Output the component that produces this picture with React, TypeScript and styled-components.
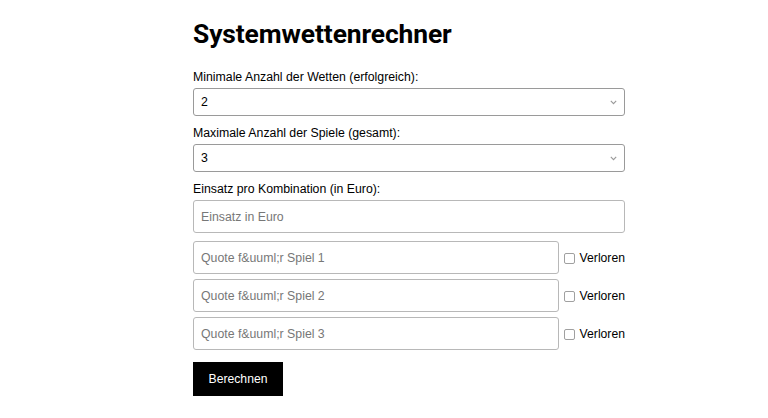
import React from "react";
import styled, { createGlobalStyle } from "styled-components";

const Global = createGlobalStyle`
  html, body { margin: 0; padding: 0; background: #fff; }
  body { font-family: "Liberation Sans", Arial, sans-serif; color: #000; }
`;

const Page = styled.div`
  width: 432px;
  margin-left: 193px;
  padding-top: 18px;
  display: flex;
  flex-direction: column;
`;

const Title = styled.h1`
  margin: 0 0 20px;
  font-family: Roboto, "Liberation Sans", sans-serif;
  font-weight: 700;
  font-size: 26.4px;
  line-height: 32px;
  letter-spacing: -0.1px;
`;

const Field = styled.div<{ $gap?: number }>`
  display: flex;
  flex-direction: column;
  gap: 3px;
  margin-bottom: ${(p) => p.$gap ?? 10}px;
`;

const Label = styled.label`
  font-size: 12.3px;
  line-height: 15px;
`;

const SelectWrap = styled.div`
  position: relative;
  height: 28px;
`;

const Select = styled.select`
  appearance: none;
  -webkit-appearance: none;
  width: 100%;
  height: 28px;
  box-sizing: border-box;
  border: 1px solid #9a9a9a;
  border-radius: 3px;
  background: #fff;
  padding: 0 7px;
  font-family: "Liberation Sans", Arial, sans-serif;
  font-size: 12.3px;
  color: #000;
  outline: none;
`;

const Chevron = styled.svg`
  position: absolute;
  right: 8px;
  top: 12px;
  pointer-events: none;
`;

const TextInput = styled.input`
  width: 100%;
  height: 33px;
  box-sizing: border-box;
  border: 1px solid #b8b8b8;
  border-radius: 3px;
  padding: 0 7px;
  font-family: "Liberation Sans", Arial, sans-serif;
  font-size: 12.3px;
  color: #000;
  outline: none;
  &::placeholder { color: #777; }
`;

const Rows = styled.div`
  display: flex;
  flex-direction: column;
  gap: 5px;
  margin-top: -1px;
`;

const Row = styled.div`
  display: flex;
  align-items: center;
`;

const QuoteInput = styled(TextInput)`
  flex: 1;
  width: auto;
`;

const Check = styled.input`
  appearance: none;
  -webkit-appearance: none;
  width: 11px;
  height: 11px;
  margin: 1px 0 0 5px;
  border: 1px solid #a0a0a0;
  border-radius: 2px;
  background: #fff;
`;

const CheckLabel = styled.label`
  margin-left: 5px;
  padding-top: 2px;
  font-size: 12.2px;
  line-height: 15px;
`;

const Button = styled.button`
  align-self: flex-start;
  margin-top: 12px;
  width: 90px;
  height: 34px;
  border: none;
  background: #000;
  color: #fff;
  font-family: "Liberation Sans", Arial, sans-serif;
  font-size: 12.2px;
  padding: 0;
`;

const SelectField = ({ label, value, options }: { label: string; value: string; options: string[] }) => (
  <Field>
    <Label>{label}</Label>
    <SelectWrap>
      <Select defaultValue={value}>
        {options.map((o) => (
          <option key={o} value={o}>{o}</option>
        ))}
      </Select>
      <Chevron width="7" height="5" viewBox="0 0 7 5">
        <path d="M0.8 0.8 L3.5 3.6 L6.2 0.8" fill="none" stroke="#999" strokeWidth="1.1" />
      </Chevron>
    </SelectWrap>
  </Field>
);

export default function App() {
  return (
    <>
      <Global />
      <Page>
        <Title>Systemwettenrechner</Title>
        <SelectField label="Minimale Anzahl der Wetten (erfolgreich):" value="2" options={["1", "2", "3"]} />
        <SelectField label="Maximale Anzahl der Spiele (gesamt):" value="3" options={["1", "2", "3", "4"]} />
        <Field $gap={9}>
          <Label>Einsatz pro Kombination (in Euro):</Label>
          <TextInput placeholder="Einsatz in Euro" />
        </Field>
        <Rows>
          {[1, 2, 3].map((n) => (
            <Row key={n}>
              <QuoteInput placeholder={`Quote f&uuml;r Spiel ${n}`} />
              <Check type="checkbox" id={`v${n}`} />
              <CheckLabel htmlFor={`v${n}`}>Verloren</CheckLabel>
            </Row>
          ))}
        </Rows>
        <Button>Berechnen</Button>
      </Page>
    </>
  );
}
